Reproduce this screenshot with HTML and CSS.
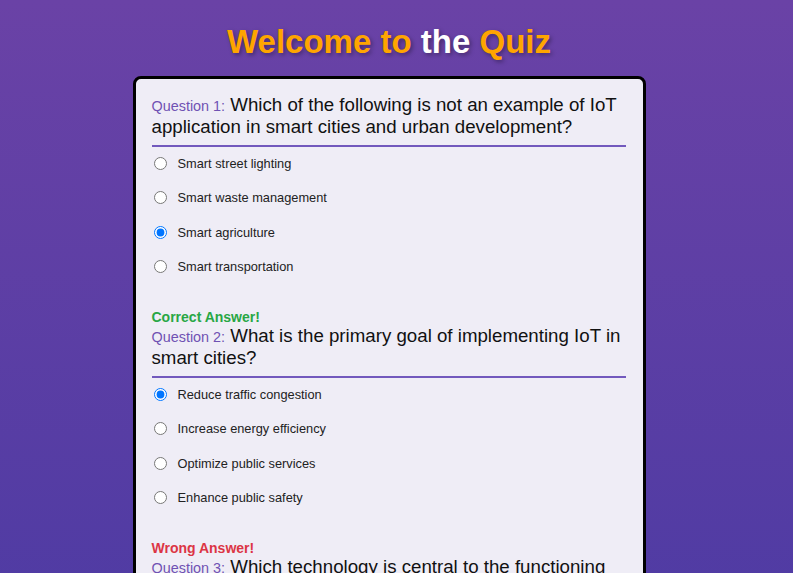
FILE: index.html
```html
<!DOCTYPE html>
<html lang="en">
<head>
<meta charset="utf-8">
<title>Quiz</title>
<link rel="stylesheet" href="styles.css">
</head>
<body>
<div class="page">
  <h1 class="title">Welcome to <span class="white">the</span> Quiz</h1>
  <div class="card">
    <div class="question">
      <div class="q-text"><span class="q-label">Question 1:</span> Which of the following is not an example of IoT application in smart cities and urban development?</div>
      <ul class="options">
        <li><label><input type="radio" name="q1"><span>Smart street lighting</span></label></li>
        <li><label><input type="radio" name="q1"><span>Smart waste management</span></label></li>
        <li><label><input type="radio" name="q1" checked><span>Smart agriculture</span></label></li>
        <li><label><input type="radio" name="q1"><span>Smart transportation</span></label></li>
      </ul>
      <div class="feedback correct">Correct Answer!</div>
    </div>
    <div class="question">
      <div class="q-text"><span class="q-label">Question 2:</span> What is the primary goal of implementing IoT in smart cities?</div>
      <ul class="options">
        <li><label><input type="radio" name="q2" checked><span>Reduce traffic congestion</span></label></li>
        <li><label><input type="radio" name="q2"><span>Increase energy efficiency</span></label></li>
        <li><label><input type="radio" name="q2"><span>Optimize public services</span></label></li>
        <li><label><input type="radio" name="q2"><span>Enhance public safety</span></label></li>
      </ul>
      <div class="feedback wrong">Wrong Answer!</div>
    </div>
    <div class="question">
      <div class="q-text"><span class="q-label">Question 3:</span> Which technology is central to the functioning of smart city infrastructure?</div>
      <ul class="options">
        <li><label><input type="radio" name="q3"><span>Blockchain</span></label></li>
        <li><label><input type="radio" name="q3"><span>Internet of Things</span></label></li>
      </ul>
    </div>
  </div>
</div>
</body>
</html>
```
FILE: styles.css
```css
html, body {
  margin: 0;
  padding: 0;
}
body {
  min-height: 100vh;
  background: linear-gradient(to bottom, #6a42a6 0%, #4b3aa3 100%);
  font-family: "Liberation Sans", Arial, sans-serif;
  overflow: hidden;
}
.page {
  width: 778px;
  display: flex;
  flex-direction: column;
  align-items: center;
  padding-top: 22px;
}
.title {
  margin: 0 0 14px;
  font-size: 33px;
  line-height: 40px;
  font-weight: bold;
  color: #ffa500;
  text-shadow: 2px 2px 4px rgba(0, 0, 0, 0.35);
}
.white {
  color: #ffffff;
}
.card {
  box-sizing: border-box;
  width: 513px;
  background: #efedf6;
  border: 3px solid #000;
  border-radius: 8px;
  padding: 15px 17px 20px 16px;
}
.question {
  display: flex;
  flex-direction: column;
}
.q-text {
  font-size: 18.7px;
  line-height: 22px;
  color: #111;
  padding-bottom: 7px;
  padding-right: 3px;
  border-bottom: 2px solid #7259bd;
}
.q-label {
  font-size: 14.4px;
  line-height: 1;
  color: #6f52b3;
}
.options {
  list-style: none;
  margin: 0;
  padding: 7px 0 0;
}
.options li {
  height: 34.5px;
}
.options label {
  display: flex;
  align-items: center;
  height: 18px;
  font-size: 12.8px;
  color: #222;
}
.options input {
  margin: 0 11px 0 2px;
  width: 13px;
  height: 13px;
}
.feedback {
  font-size: 14px;
  font-weight: bold;
  line-height: 16px;
  margin-top: 17px;
  margin-bottom: 0;
}
.correct {
  color: #28a745;
}
.wrong {
  color: #dc3545;
}
```
